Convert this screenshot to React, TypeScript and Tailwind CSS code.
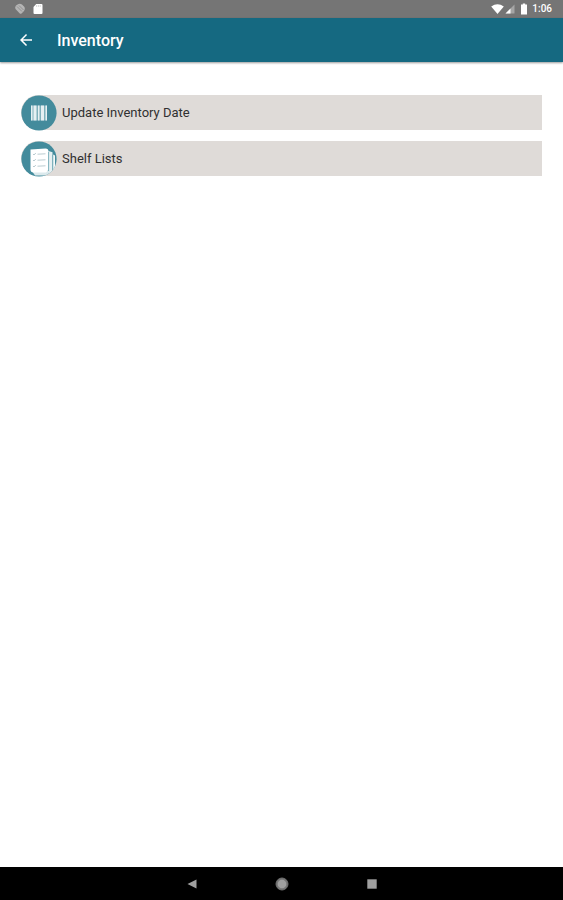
import type { ReactNode } from "react";

function BarcodeIcon() {
  return (
    <svg viewBox="0 0 36 36" className="h-9 w-9 shrink-0" aria-hidden="true">
      <circle cx="18" cy="18" r="17.6" fill="#438b9c" />
      <rect x="10" y="10.5" width="16" height="15" fill="#7fb0bb" />
      <path d="M10 10.5h1.5v15H10zM12.5 10.5h3v15h-3zM17 10.5h1.5v15H17zM20 10.5h3v15h-3zM24.5 10.5H26v15h-1.5z" fill="#e6f0f2" />
    </svg>
  );
}

function ShelfListIcon() {
  return (
    <svg viewBox="0 0 36 36" className="h-9 w-9 shrink-0" aria-hidden="true">
      <clipPath id="shelf-circle">
        <circle cx="18" cy="18" r="17.6" />
      </clipPath>
      <circle cx="18" cy="18" r="17.6" fill="#438b9c" />
      <g clipPath="url(#shelf-circle)">
        <path d="M27.5 10l4 1.2V31l-4 3.5z" fill="#e6f0f2" />
        <path d="M32 13.5l2 1v14l-2 3z" fill="#f5fafa" />
        <path d="M11 30h18l-2.5 4.5H14z" fill="#dbe9ec" />
        <path d="M9.5 8.5L24.5 7.5q3 0 3 3V29l-2.5 2.5H12.5q-3 0-3-3z" fill="#fff" />
        <path d="M27.6 11v19M31.8 14v17" stroke="#6fa7b4" strokeWidth="0.8" />
        <path
          d="M12 13l1 1 1.8-2M16.5 13.2l8-.4M12 19l1 1 1.8-2M16.5 19.2l8-.4M12 25l1 1 1.8-2M16.5 25.2l8-.4"
          fill="none"
          stroke="#b9cbd0"
          strokeWidth="1"
        />
      </g>
    </svg>
  );
}

const menuItems: { label: string; icon: ReactNode }[] = [
  { label: "Update Inventory Date", icon: <BarcodeIcon /> },
  { label: "Shelf Lists", icon: <ShelfListIcon /> },
];

function StatusBar() {
  return (
    <div className="flex h-[18px] items-center justify-between bg-[#757575] pl-[14px] pr-[11px] text-white">
      <div className="flex items-center gap-[7px]">
        <svg viewBox="0 0 12 12" className="h-3 w-3" aria-hidden="true">
          <path d="M4 1.2Q6 .2 8 1.5L10.5 4Q11.5 6 10 8L7.5 10.5Q6.5 11.3 5.5 10.2L1.5 6Q.5 4 2 2.5z" fill="#b5b5b5" />
          <path d="M3 3.5l5 5M5 2.5l4.5 4.5" stroke="#929292" />
        </svg>
        <svg viewBox="0 0 10 12" className="h-3 w-[10px]" aria-hidden="true">
          <path d="M3.2 1H8.5q1 0 1 1v8q0 1-1 1h-7q-1 0-1-1V4z" fill="#fff" />
          <path d="M3.6 2.2v1.6M5.4 2.2v1.6M7.2 2.2v1.6" stroke="#bbb" strokeWidth="0.7" />
        </svg>
      </div>
      <div className="flex items-center">
        <svg viewBox="0 0 13 12" className="h-3 w-[13px]" aria-hidden="true">
          <path d="M.2 3.5Q6.5-.8 12.8 3.5L6.5 11z" fill="#fff" />
        </svg>
        <svg viewBox="0 0 12 12" className="h-3 w-3" aria-hidden="true">
          <path d="M10.5 1.5v9h-9z" fill="#a5a5a5" />
          <path d="M6.5 5.5v5h-5z" fill="#fff" />
        </svg>
        <svg viewBox="0 0 8 12" className="ml-1 h-3 w-2" aria-hidden="true">
          <path d="M2.8.5h2.4v1H7v10H1v-10h1.8z" fill="#fff" />
        </svg>
        <span className="ml-1 text-[10px] leading-[18px] font-medium">1:06</span>
      </div>
    </div>
  );
}

export default function App() {
  return (
    <div className="flex min-h-screen flex-col bg-white font-['Roboto',sans-serif]">
      <StatusBar />

      {/* App bar */}
      <header className="flex h-11 items-center bg-[#156981] pl-[18px] text-white shadow-[0_1px_2px_rgba(0,0,0,0.4)]">
        <button type="button" aria-label="Back" className="flex h-6 w-4 items-center justify-center">
          <svg viewBox="0 0 24 24" className="h-[18px] w-[18px] shrink-0" aria-hidden="true">
            <path d="M20 11H7.83l5.59-5.59L12 4l-8 8 8 8 1.41-1.41L7.83 13H20z" fill="currentColor" />
          </svg>
        </button>
        <h1 className="ml-[23px] pt-0.5 text-base font-medium">Inventory</h1>
      </header>

      {/* Menu */}
      <main className="flex-1 px-[21px] pt-[33px]">
        <ul className="flex flex-col gap-[11px]">
          {menuItems.map(({ label, icon }) => (
            <li key={label}>
              <button
                type="button"
                className="flex h-[35px] w-full items-center rounded-l-full bg-[#dfdbd8] text-left text-[13px] text-[#303030]"
              >
                {icon}
                <span className="ml-[5px] pt-px">{label}</span>
              </button>
            </li>
          ))}
        </ul>
      </main>

      {/* System navigation */}
      <nav className="flex h-[33px] items-center justify-center bg-black text-[#a0a0a0]">
        <button type="button" aria-label="Back" className="flex w-[90px] justify-center">
          <svg viewBox="0 0 14 14" className="h-[14px] w-[14px]" aria-hidden="true">
            <path d="M11.5 2.5v9L2.5 7z" fill="currentColor" />
          </svg>
        </button>
        <button type="button" aria-label="Home" className="flex w-[90px] justify-center">
          <svg viewBox="0 0 14 14" className="h-[14px] w-[14px]" aria-hidden="true">
            <circle cx="7" cy="7" r="6" fill="#777" stroke="#707070" />
            <circle cx="7" cy="7" r="4.3" fill="currentColor" />
          </svg>
        </button>
        <button type="button" aria-label="Recent apps" className="flex w-[90px] justify-center">
          <svg viewBox="0 0 14 14" className="h-[14px] w-[14px]" aria-hidden="true">
            <path d="M2.3 2.3h9.4v9.4H2.3z" fill="currentColor" />
          </svg>
        </button>
      </nav>
    </div>
  );
}
